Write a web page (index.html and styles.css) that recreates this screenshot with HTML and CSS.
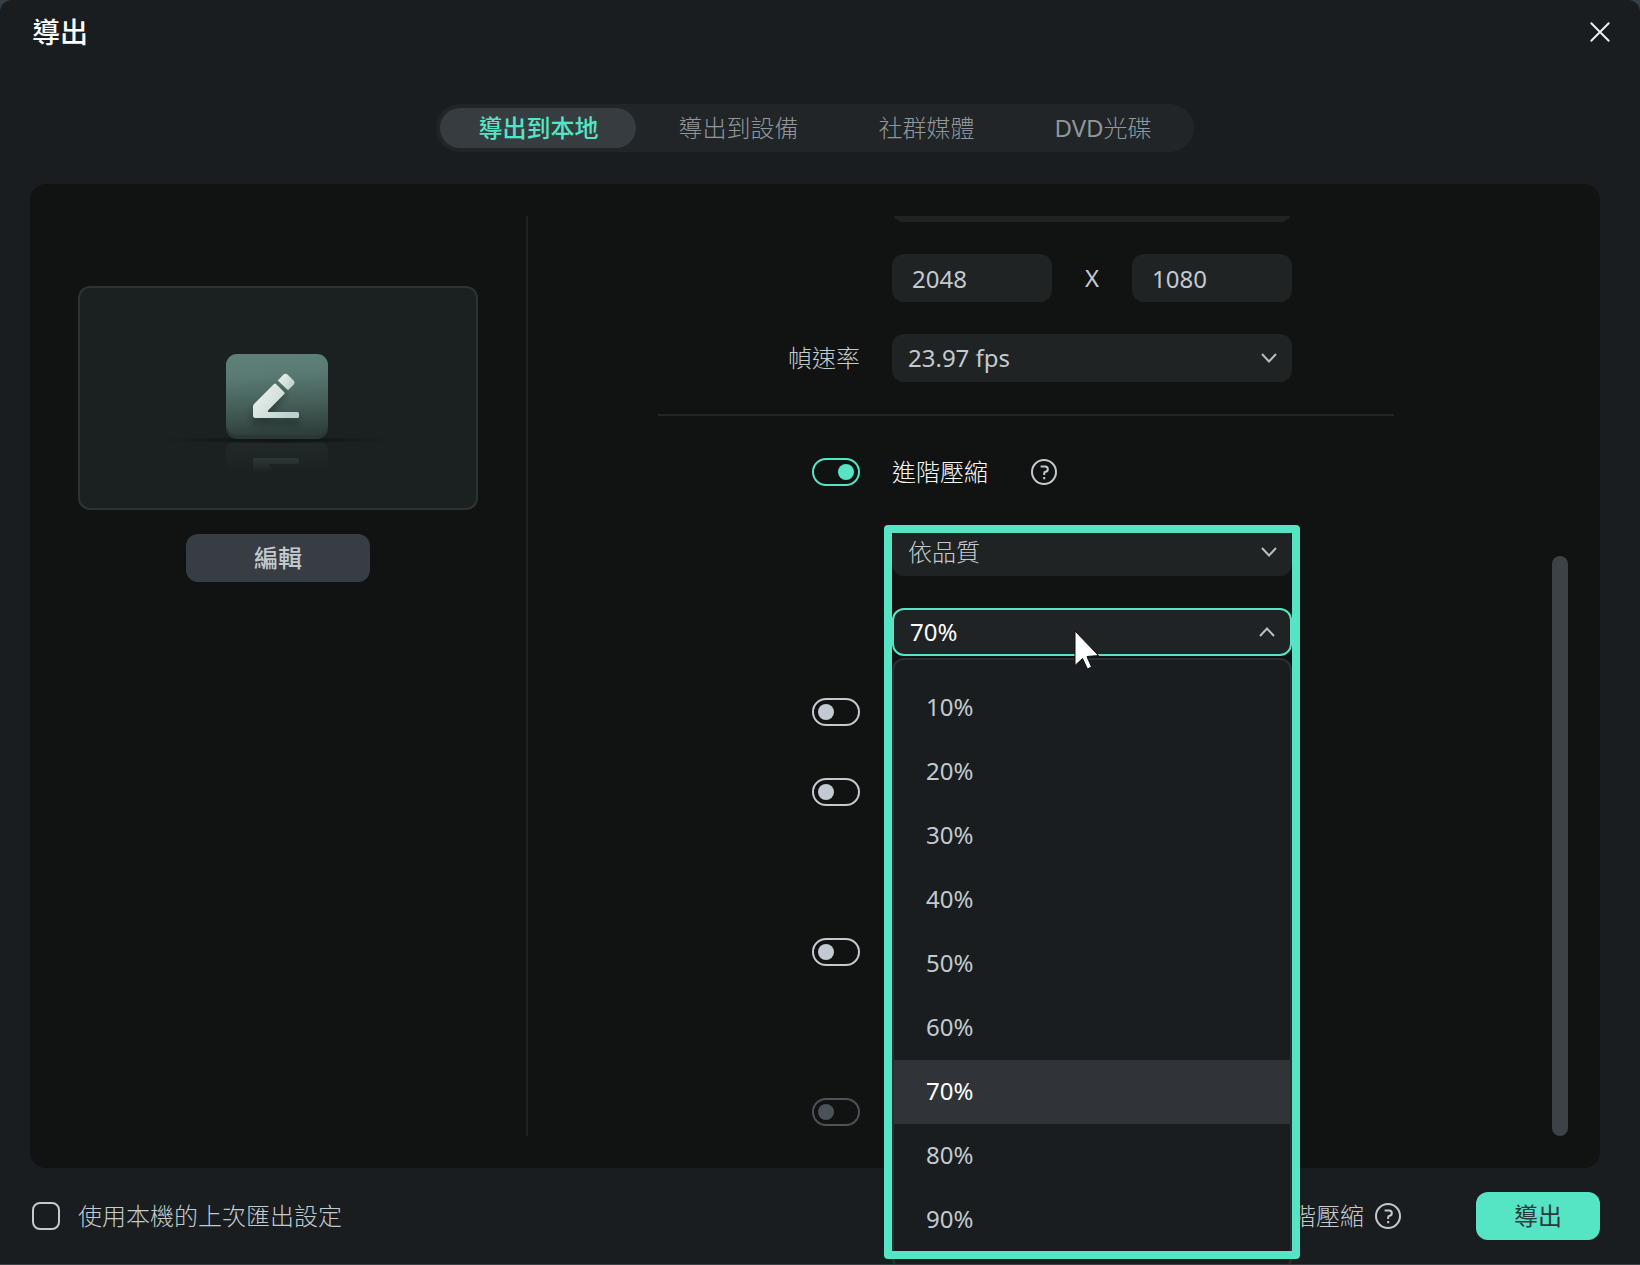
FILE: index.html
```html
<!DOCTYPE html>
<html lang="zh-Hant">
<head>
<meta charset="utf-8">
<meta name="viewport" content="width=device-width, initial-scale=1">
<title>導出</title>
<link rel="stylesheet" href="styles.css">
</head>
<body>
<main class="dialog">
  <header class="titlebar">
    <h1 class="title">導出</h1>
    <button class="close" type="button" aria-label="關閉">
      <svg width="20" height="20" viewBox="0 0 20 20"><path d="M0.8 0.8L19.2 19.2M19.2 0.8L0.8 19.2"/></svg>
    </button>
  </header>

  <nav class="tabs">
    <button class="tab tab-active" type="button">導出到本地</button>
    <button class="tab" type="button">導出到設備</button>
    <button class="tab" type="button">社群媒體</button>
    <button class="tab" type="button"><span class="latin">DVD</span>光碟</button>
  </nav>

  <section class="panel">
    <aside class="cover">
      <div class="preview">
        <svg viewBox="0 0 396 220" aria-hidden="true">
          <defs>
            <linearGradient id="card" x1="0.45" y1="0" x2="0.55" y2="1">
              <stop offset="0" stop-color="#5f7f79"/>
              <stop offset="0.24" stop-color="#5a7b74"/>
              <stop offset="0.6" stop-color="#46605a"/>
              <stop offset="1" stop-color="#2f3e3b"/>
            </linearGradient>
            <linearGradient id="pen" x1="0" y1="0" x2="1" y2="0.6">
              <stop offset="0" stop-color="#f2f6f4"/>
              <stop offset="1" stop-color="#bdd2ca"/>
            </linearGradient>
            <linearGradient id="mirror" x1="0" y1="0" x2="0" y2="1">
              <stop offset="0" stop-color="#222a29"/>
              <stop offset="1" stop-color="#1b2121"/>
            </linearGradient>
            <linearGradient id="mirror-pen" gradientUnits="userSpaceOnUse" x1="0" y1="168" x2="0" y2="184">
              <stop offset="0" stop-color="#323a39"/>
              <stop offset="1" stop-color="#1c2222"/>
            </linearGradient>
            <radialGradient id="ground">
              <stop offset="0" stop-color="#0f1413"/>
              <stop offset="0.5" stop-color="#141919"/>
              <stop offset="1" stop-color="#1b2121" stop-opacity="0"/>
            </radialGradient>
            <filter id="soft" x="-30%" y="-30%" width="160%" height="180%"><feGaussianBlur stdDeviation="3"/></filter>
          </defs>
          <path d="M146 184V164Q146 153 157 153H237Q248 153 248 164V184Z" fill="url(#mirror)"/>
          <path d="M173 184V172Q173 170 175 170H217Q219 170 219 172V174Q219 176 217 176H188L194 184Z" fill="url(#mirror-pen)"/>
          <ellipse cx="197" cy="152" rx="140" ry="4" fill="url(#ground)"/>
          <rect x="146" y="70" width="102" height="81" rx="11" fill="#2b3635"/>
          <rect x="146" y="66" width="102" height="81" rx="11" fill="url(#card)"/>
          <path d="M175 122L202 100L206 106L190 130H219V138H173V122Z" fill="#1d2b28" opacity="0.5" filter="url(#soft)"/>
          <g fill="url(#pen)">
            <path d="M194 96Q195 95 196 96L204.300 104.300Q205 105.300 204.300 106L188 122.500V124H217.500Q219 124 219 125.500V128.500Q219 130 217.500 130H175.500Q173 130 173 127.500V118.500Q173 117 174 116Z"/>
            <path d="M203.500 86.600Q205.500 85 207.500 86.600L213.700 92.600Q215.500 94.600 213.800 96.500L208 102.200L197.800 92.500Z"/>
          </g>
        </svg>
      </div>
      <button class="edit" type="button">編輯</button>
    </aside>

    <div class="settings">
      <form class="form">
        <div class="row row-cut">
          <div class="field"><select class="box" aria-label="解析度"><option></option></select></div>
        </div>
        <div class="row">
          <div class="field size">
            <input class="box number" type="text" value="2048" aria-label="寬度">
            <span class="latin">X</span>
            <input class="box number" type="text" value="1080" aria-label="高度">
          </div>
        </div>
        <div class="row">
          <label class="label" for="fps">幀速率</label>
          <div class="field">
            <select class="box" id="fps"><option>23.97 fps</option></select>
            <svg class="chevron" width="16" height="10" viewBox="0 0 16 10"><path d="M1 1L8 8.500L15 1"/></svg>
          </div>
        </div>
        <hr class="rule">
        <div class="row">
          <input class="switch" id="advanced" type="checkbox" role="switch" checked>
          <div class="field named">
            <label class="name" for="advanced">進階壓縮</label>
            <button class="help" type="button" aria-label="說明">
              <svg width="28" height="28" viewBox="0 0 28 28"><circle cx="14" cy="14" r="12"/><path d="M10.600 8.500H15.200Q17.800 8.500 17.800 11.200Q17.800 13.500 15.500 13.800Q14.200 14 14.200 15.200V17M14.200 19V21.200"/></svg>
            </button>
          </div>
        </div>
        <div class="row">
          <div class="field">
            <select class="box box-light" aria-label="壓縮方式"><option>依品質</option></select>
            <svg class="chevron" width="16" height="10" viewBox="0 0 16 10"><path d="M1 1L8 8.500L15 1"/></svg>
          </div>
        </div>
        <div class="row">
          <div class="field">
            <select class="box box-open" aria-label="品質"><option>70%</option></select>
            <svg class="chevron chevron-open" width="16" height="10" viewBox="0 0 16 10"><path d="M1 9L8 1.500L15 9"/></svg>
            <ul class="menu">
              <li class="item">10%</li>
              <li class="item">20%</li>
              <li class="item">30%</li>
              <li class="item">40%</li>
              <li class="item">50%</li>
              <li class="item">60%</li>
              <li class="item item-current">70%</li>
              <li class="item">80%</li>
              <li class="item">90%</li>
            </ul>
            <div class="frame"></div>
            <svg class="pointer" width="28" height="42" viewBox="0 0 28 42"><path d="M1 1V35.500L8.500 28.500L13.500 39L17.500 37L13 26.500L24.500 25.500Z"/></svg>
          </div>
        </div>
        <div class="row"><input class="switch" type="checkbox" role="switch" aria-label="選項一"></div>
        <div class="row"><input class="switch" type="checkbox" role="switch" aria-label="選項二"></div>
        <div class="row"></div>
        <div class="row"><input class="switch" type="checkbox" role="switch" aria-label="選項三"></div>
        <div class="row"></div>
        <div class="row"><input class="switch" type="checkbox" role="switch" aria-label="選項四" disabled></div>
      </form>
      <div class="scrollbar"><div class="thumb"></div></div>
    </div>
  </section>

  <footer class="footer">
    <label class="remember"><input class="tick" type="checkbox">使用本機的上次匯出設定</label>
    <div class="actions">
      <span>進階壓縮</span>
      <button class="help" type="button" aria-label="說明">
        <svg width="28" height="28" viewBox="0 0 28 28"><circle cx="14" cy="14" r="12"/><path d="M10.600 8.500H15.200Q17.800 8.500 17.800 11.200Q17.800 13.500 15.500 13.800Q14.200 14 14.200 15.200V17M14.200 19V21.200"/></svg>
      </button>
      <button class="export" type="button">導出</button>
    </div>
  </footer>
</main>
</body>
</html>
```
FILE: styles.css
```css
* {
  box-sizing: border-box;
}

body {
  margin: 0;
  background: #353f45;
  color: #c3cacf;
  font: 300 24px/32px "Noto Sans", "Noto Sans CJK TC", sans-serif;
}

button,
input,
select {
  margin: 0;
  padding: 0;
  border: 0;
  background: none;
  color: inherit;
  font: inherit;
}

svg {
  display: block;
  fill: none;
}

.latin {
  font-weight: 400;
}

.dialog {
  display: flex;
  flex-direction: column;
  min-height: 100vh;
  padding: 0 40px 0 30px;
  overflow: hidden;
  border-bottom: 1px solid #3a4148;
  border-radius: 12px 12px 0 0;
  background: #191d1f;
}

.titlebar {
  display: flex;
  align-items: center;
  justify-content: space-between;
  height: 64px;
  margin-right: -10px;
  padding-left: 2px;
}

.title {
  margin: 0;
  color: #fff;
  font-size: 28px;
  font-weight: 500;
}

.close svg {
  stroke: #eee;
  stroke-width: 2;
}

.tabs {
  display: flex;
  align-self: center;
  gap: 4px;
  margin: 40px 0 32px;
  padding: 4px;
  border-radius: 24px;
  background: #212527;
}

.tab {
  height: 40px;
  padding: 0 38px;
  border-radius: 20px;
  color: #8f979c;
  white-space: nowrap;
}

.tab-active {
  background: #373c40;
  color: #55e5c5;
  font-weight: 500;
}

.panel {
  display: flex;
  flex: 1;
  padding: 32px 0;
  border-radius: 16px;
  background: #111312;
}

.cover {
  display: flex;
  flex-direction: column;
  align-items: center;
  gap: 24px;
  width: 498px;
  padding: 70px 48px 0;
  border-right: 2px solid #1f2222;
}

.preview {
  width: 400px;
  border: 2px solid #2c3433;
  border-radius: 12px;
  background: #1b2121;
}

.edit {
  width: 184px;
  height: 48px;
  border-radius: 12px;
  background: #373d43;
  font-weight: 500;
}

.settings {
  display: flex;
  flex: 1;
  gap: 28px;
  padding-right: 32px;
}

.form {
  display: flex;
  flex: 1;
  flex-direction: column;
  align-items: center;
  gap: 32px;
}

.row {
  display: grid;
  grid-template-columns: 202px 400px;
  align-items: center;
  column-gap: 32px;
  width: 736px;
  height: 48px;
}

.row-cut {
  align-content: end;
  height: 6px;
  overflow: hidden;
}

.rule {
  width: 736px;
  height: 2px;
  margin: 0;
  border: 0;
  background: #222525;
}

.label {
  justify-self: end;
}

.field {
  position: relative;
  display: flex;
  grid-column: 2;
  align-items: center;
}

.size {
  justify-content: space-between;
}

.box {
  width: 100%;
  height: 48px;
  padding: 0 16px;
  border-radius: 12px;
  outline: 0;
  background: #1f2324;
  font-weight: 400;
  appearance: none;
}

.box-light {
  font-weight: 300;
}

.number {
  width: 160px;
  padding: 0 20px;
}

.box-open {
  border: 2px solid #55e5c5;
  color: #fff;
}

.chevron {
  position: absolute;
  right: 15px;
  pointer-events: none;
  stroke: #b9bdbf;
  stroke-width: 2;
}

.chevron-open {
  right: 17px;
}

.named {
  gap: 42px;
}

.name {
  color: #f5f7f8;
}

.help svg {
  stroke: #c3cacf;
  stroke-width: 2;
}

.switch {
  display: flex;
  grid-column: 1;
  justify-self: end;
  width: 48px;
  height: 28px;
  padding: 4px;
  border: 2px solid #c3cacf;
  border-radius: 14px;
  appearance: none;
}

.switch::before {
  width: 16px;
  height: 16px;
  border-radius: 50%;
  background: #c3cad1;
  content: "";
}

.switch:checked {
  justify-content: flex-end;
  border-color: #55e5c5;
}

.switch:checked::before {
  background: #55e5c5;
}

.switch:disabled {
  border-color: #4b5258;
}

.switch:disabled::before {
  background: #4b5258;
}

.menu {
  position: absolute;
  z-index: 1;
  top: 50px;
  right: 0;
  left: 0;
  margin: 0;
  padding: 16px 0;
  border: 2px solid #2b2f33;
  border-radius: 12px;
  background: #191d1f;
  font-weight: 400;
  list-style: none;
}

.item {
  padding: 15px 32px 17px;
}

.item-current {
  background: #303438;
  color: #fff;
}

.frame {
  position: absolute;
  z-index: 2;
  top: -83px;
  right: -8px;
  left: -8px;
  height: 734px;
  border: 8px solid #55e5c5;
  border-radius: 4px;
  pointer-events: none;
}

.pointer {
  position: absolute;
  z-index: 3;
  top: 22px;
  left: 182px;
  fill: #fff;
  pointer-events: none;
  stroke: #111;
}

.scrollbar {
  display: flex;
  align-items: flex-end;
  width: 16px;
}

.thumb {
  width: 16px;
  height: 63%;
  border-radius: 8px;
  background: #3c4248;
}

.footer {
  display: flex;
  align-items: center;
  justify-content: space-between;
  height: 96px;
  padding-left: 2px;
}

.remember {
  display: flex;
  align-items: center;
  gap: 18px;
}

.tick {
  width: 28px;
  height: 28px;
  border: 2px solid #c3cacf;
  border-radius: 8px;
  appearance: none;
}

.actions {
  display: flex;
  align-items: center;
  gap: 10px;
}

.export {
  width: 124px;
  height: 48px;
  margin-left: 64px;
  border-radius: 12px;
  background: #55e5c5;
  color: #2b3a3c;
  font-weight: 400;
}
```
